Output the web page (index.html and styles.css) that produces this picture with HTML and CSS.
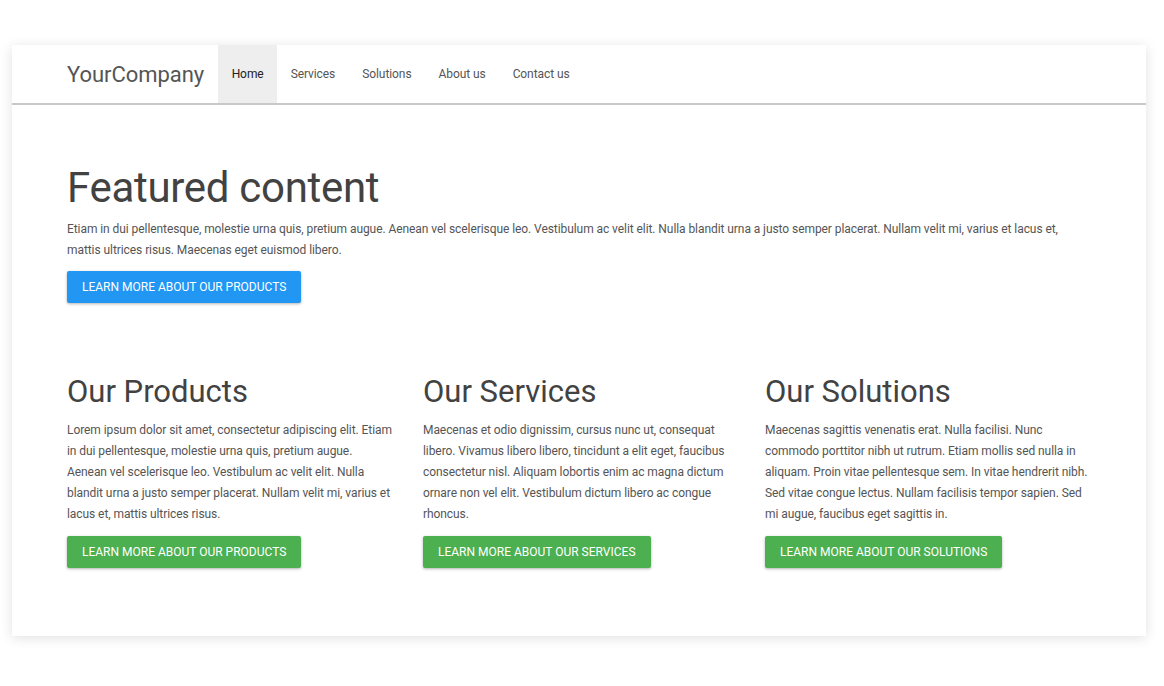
FILE: index.html
```html
<!DOCTYPE html>
<html lang="en">
<head>
<meta charset="utf-8">
<title>YourCompany</title>
<link rel="stylesheet" href="styles.css">
</head>
<body>
<div class="card">
  <header class="navbar">
    <a class="brand" href="#">YourCompany</a>
    <nav class="nav">
      <a class="nav-item active" href="#">Home</a>
      <a class="nav-item" href="#">Services</a>
      <a class="nav-item" href="#">Solutions</a>
      <a class="nav-item" href="#">About us</a>
      <a class="nav-item" href="#">Contact us</a>
    </nav>
  </header>
  <main class="content">
    <section class="featured">
      <h1 class="featured-title">Featured content</h1>
      <p class="text">Etiam in dui pellentesque, molestie urna quis, pretium augue. Aenean vel scelerisque leo. Vestibulum ac velit elit. Nulla blandit urna a justo semper placerat. Nullam velit mi, varius et lacus et, mattis ultrices risus. Maecenas eget euismod libero.</p>
      <a class="btn btn-blue" href="#">Learn more about our products</a>
    </section>
    <section class="columns">
      <div class="col">
        <h2 class="col-title">Our Products</h2>
        <p class="text col-text">Lorem ipsum dolor sit amet, consectetur adipiscing elit. Etiam in dui pellentesque, molestie urna quis, pretium augue. Aenean vel scelerisque leo. Vestibulum ac velit elit. Nulla blandit urna a justo semper placerat. Nullam velit mi, varius et lacus et, mattis ultrices risus.</p>
        <a class="btn btn-green" href="#">Learn more about our products</a>
      </div>
      <div class="col">
        <h2 class="col-title">Our Services</h2>
        <p class="text col-text">Maecenas et odio dignissim, cursus nunc ut, consequat libero. Vivamus libero libero, tincidunt a elit eget, faucibus consectetur nisl. Aliquam lobortis enim ac magna dictum ornare non vel elit. Vestibulum dictum libero ac congue rhoncus.</p>
        <a class="btn btn-green" href="#">Learn more about our services</a>
      </div>
      <div class="col">
        <h2 class="col-title">Our Solutions</h2>
        <p class="text col-text">Maecenas sagittis venenatis erat. Nulla facilisi. Nunc commodo porttitor nibh ut rutrum. Etiam mollis sed nulla in aliquam. Proin vitae pellentesque sem. In vitae hendrerit nibh. Sed vitae congue lectus. Nullam facilisis tempor sapien. Sed mi augue, faucibus eget sagittis in.</p>
        <a class="btn btn-green" href="#">Learn more about our solutions</a>
      </div>
    </section>
  </main>
</div>
</body>
</html>
```

FILE: styles.css
```css
* { box-sizing: border-box; }
html, body { margin: 0; padding: 0; background: #fff; }
body {
  font-family: Roboto, "Noto Sans", Arial, sans-serif;
  color: #555;
  padding: 45px 18px 48px 12px;
}
.card {
  background: #fff;
  box-shadow: 0 2px 12px rgba(0,0,0,0.12);
}
.navbar {
  display: flex;
  align-items: stretch;
  height: 60px;
  padding: 0 55px;
  border-bottom: 2px solid #c8c8c8;
}
.brand {
  display: flex;
  align-items: center;
  font-size: 22px;
  letter-spacing: -0.05px;
  color: #555;
  text-decoration: none;
  padding-right: 14px;
}
.nav { display: flex; }
.nav-item {
  display: flex;
  align-items: center;
  padding: 0 13.5px;
  font-size: 12px;
  letter-spacing: -0.08px;
  color: #555;
  text-decoration: none;
}
.nav-item.active { background: #eeeeee; color: #222; }
.content { padding: 58px 50px 68px 55px; }
.featured { max-width: 1024px; }
.featured-title {
  margin: 0;
  font-size: 42px;
  font-weight: 400;
  letter-spacing: -0.3px;
  line-height: 50px;
  color: #424242;
}
.text {
  margin: 6px 0 10px;
  font-size: 12px;
  letter-spacing: -0.07px;
  line-height: 21px;
  color: #555;
}
.col-text { margin: 8px 0 11px; }
.btn {
  display: inline-block;
  height: 32px;
  line-height: 32px;
  padding: 0 15px;
  font-size: 12px;
  text-transform: uppercase;
  color: #fff;
  text-decoration: none;
  border-radius: 2px;
  box-shadow: 0 1px 3px rgba(0,0,0,0.3);
}
.btn-blue { background: #2196f3; }
.btn-green { background: #4caf50; }
.columns {
  display: grid;
  grid-template-columns: 326px 312px 1fr;
  column-gap: 30px;
  margin-top: 69px;
}
.col-title {
  margin: 0;
  font-size: 31px;
  font-weight: 400;
  line-height: 40px;
  color: #424242;
}
```
